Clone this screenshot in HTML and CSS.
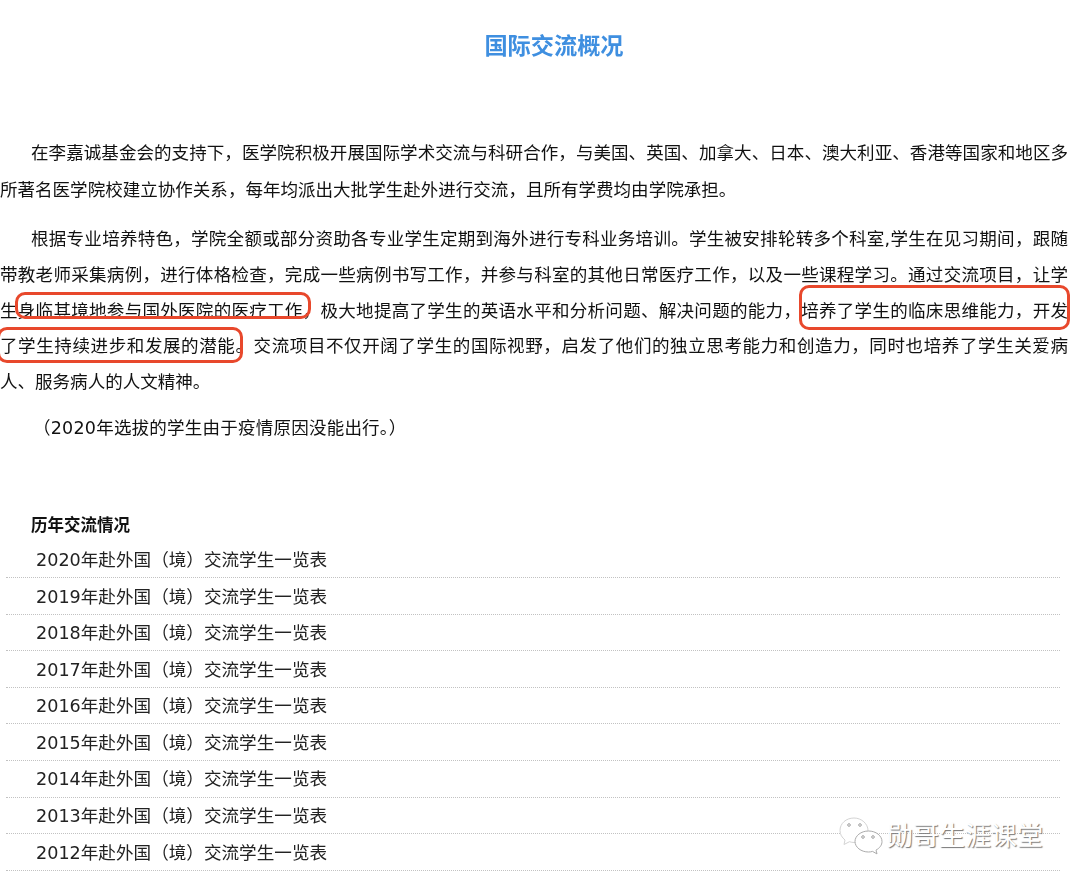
FILE: index.html
```html
<!DOCTYPE html>
<html lang="zh-CN">
<head>
<meta charset="utf-8">
<title>国际交流概况</title>
<link rel="stylesheet" href="styles.css">
</head>
<body>
<main class="page">
  <h1 class="title">国际交流概况</h1>
  <section class="article">
    <p class="para first">在李嘉诚基金会的支持下，医学院积极开展国际学术交流与科研合作，与美国、英国、加拿大、日本、澳大利亚、香港等国家和地区多所著名医学院校建立协作关系，每年均派出大批学生赴外进行交流，且所有学费均由学院承担。</p>
    <p class="para second">根据专业培养特色，学院全额或部分资助各专业学生定期到海外进行专科业务培训。学生被安排轮转多个科室,学生在见习期间，跟随带教老师采集病例，进行体格检查，完成一些病例书写工作，并参与科室的其他日常医疗工作，以及一些课程学习。通过交流项目，让学生身临其境地参与国外医院的医疗工作，极大地提高了学生的英语水平和分析问题、解决问题的能力，培养了学生的临床思维能力，开发了学生持续进步和发展的潜能。交流项目不仅开阔了学生的国际视野，启发了他们的独立思考能力和创造力，同时也培养了学生关爱病人、服务病人的人文精神。</p>
    <p class="para note">（2020年选拔的学生由于疫情原因没能出行。）</p>
  </section>
  <h2 class="subtitle">历年交流情况</h2>
  <ul class="list">
    <li>2020年赴外国（境）交流学生一览表</li>
    <li>2019年赴外国（境）交流学生一览表</li>
    <li>2018年赴外国（境）交流学生一览表</li>
    <li>2017年赴外国（境）交流学生一览表</li>
    <li>2016年赴外国（境）交流学生一览表</li>
    <li>2015年赴外国（境）交流学生一览表</li>
    <li>2014年赴外国（境）交流学生一览表</li>
    <li>2013年赴外国（境）交流学生一览表</li>
    <li>2012年赴外国（境）交流学生一览表</li>
  </ul>
</main>
<div class="mark mark-a"></div>
<div class="mark mark-b"></div>
<div class="mark mark-c"></div>
<div class="watermark">
  <svg class="wx" width="46" height="38" viewBox="0 0 46 38">
    <path class="bubble back" d="M15 1C7 1 1 6.500 1 13.500c0 4 2 7 5 9.500l-1 4.500 5.500-2.800c1.500.5 3 .8 4.500.8 7.700 0 14-5.500 14-12S22.700 1 15 1z"/>
    <circle class="eye" cx="10" cy="8" r="1.300"/>
    <circle class="eye" cx="21" cy="8" r="1.300"/>
    <path class="bubble front" d="M29.500 14C22 14 16 18.800 16 24.500S22 35 29.500 35c1.400 0 2.800-.2 4-.6l4.500 2.500-1-3.800c3.700-2 6-5 6-8.600C43 18.800 37 14 29.500 14z"/>
    <circle class="eye" cx="24" cy="20" r="1.300"/>
    <circle class="eye" cx="34" cy="20" r="1.300"/>
  </svg>
  <span class="mark-text">勋哥生涯课堂</span>
</div>
</body>
</html>
```
FILE: styles.css
```css
* { box-sizing: border-box; }
html, body { margin: 0; padding: 0; background: #fff; }
body {
  width: 1080px;
  height: 884px;
  overflow: hidden;
  position: relative;
  font-family: "DejaVu Sans", "Noto Sans CJK SC", sans-serif;
  color: #111;
}
.page { padding: 30px 12px 0 0; filter: blur(0.35px); }
.title {
  margin: 0 0 74px 0;
  padding-left: 40px;
  text-align: center;
  font-size: 23.2px;
  line-height: 31px;
  font-weight: 700;
  color: #3f8fe0;
}
.article { margin-bottom: 65px; }
.para {
  margin: 0 0 14px 0;
  font-size: 17.55px;
  line-height: 35.7px;
  text-align: justify;
  text-indent: 31px;
  width: 1068px;
}
.first { line-height: 36.6px; }
.second { margin-bottom: 10px; }
.note { text-indent: 33px; letter-spacing: 0.2px; }
.subtitle {
  margin: 0;
  padding-left: 31px;
  font-size: 16.5px;
  line-height: 30px;
  font-weight: 700;
  color: #111;
}
.list { list-style: none; margin: 0 0 0 6px; padding: 0; width: 1054px; }
.list li {
  height: 36.6px;
  padding-left: 30px;
  padding-top: 3.5px;
  font-size: 17.6px;
  line-height: 30px;
  color: #222;
  border-bottom: 1px dotted #c2c2c2;
}
.mark {
  position: absolute;
  border: 3.5px solid #e8482c;
  border-radius: 10px;
}
.mark-a { left: 15px; top: 292px; width: 296px; height: 27px; }
.mark-b { left: -3px; top: 327px; width: 246px; height: 36px; }
.mark-c { left: 799px; top: 285px; width: 271px; height: 45px; }
.watermark {
  position: absolute;
  left: 839px;
  top: 817px;
  display: flex;
  align-items: center;
  gap: 2px;
}
.wx { display: block; }
.bubble { fill: #fff; stroke-width: 1; }
.back { stroke: #d4d4d4; }
.front { stroke: #ababab; }
.eye { fill: #fff; stroke: #a0a0a0; stroke-width: 1; }
.mark-text {
  font-size: 26px;
  line-height: 34px;
  color: #fff;
  font-weight: 400;
  text-shadow: 1px 1px 1px #777;
}
```
